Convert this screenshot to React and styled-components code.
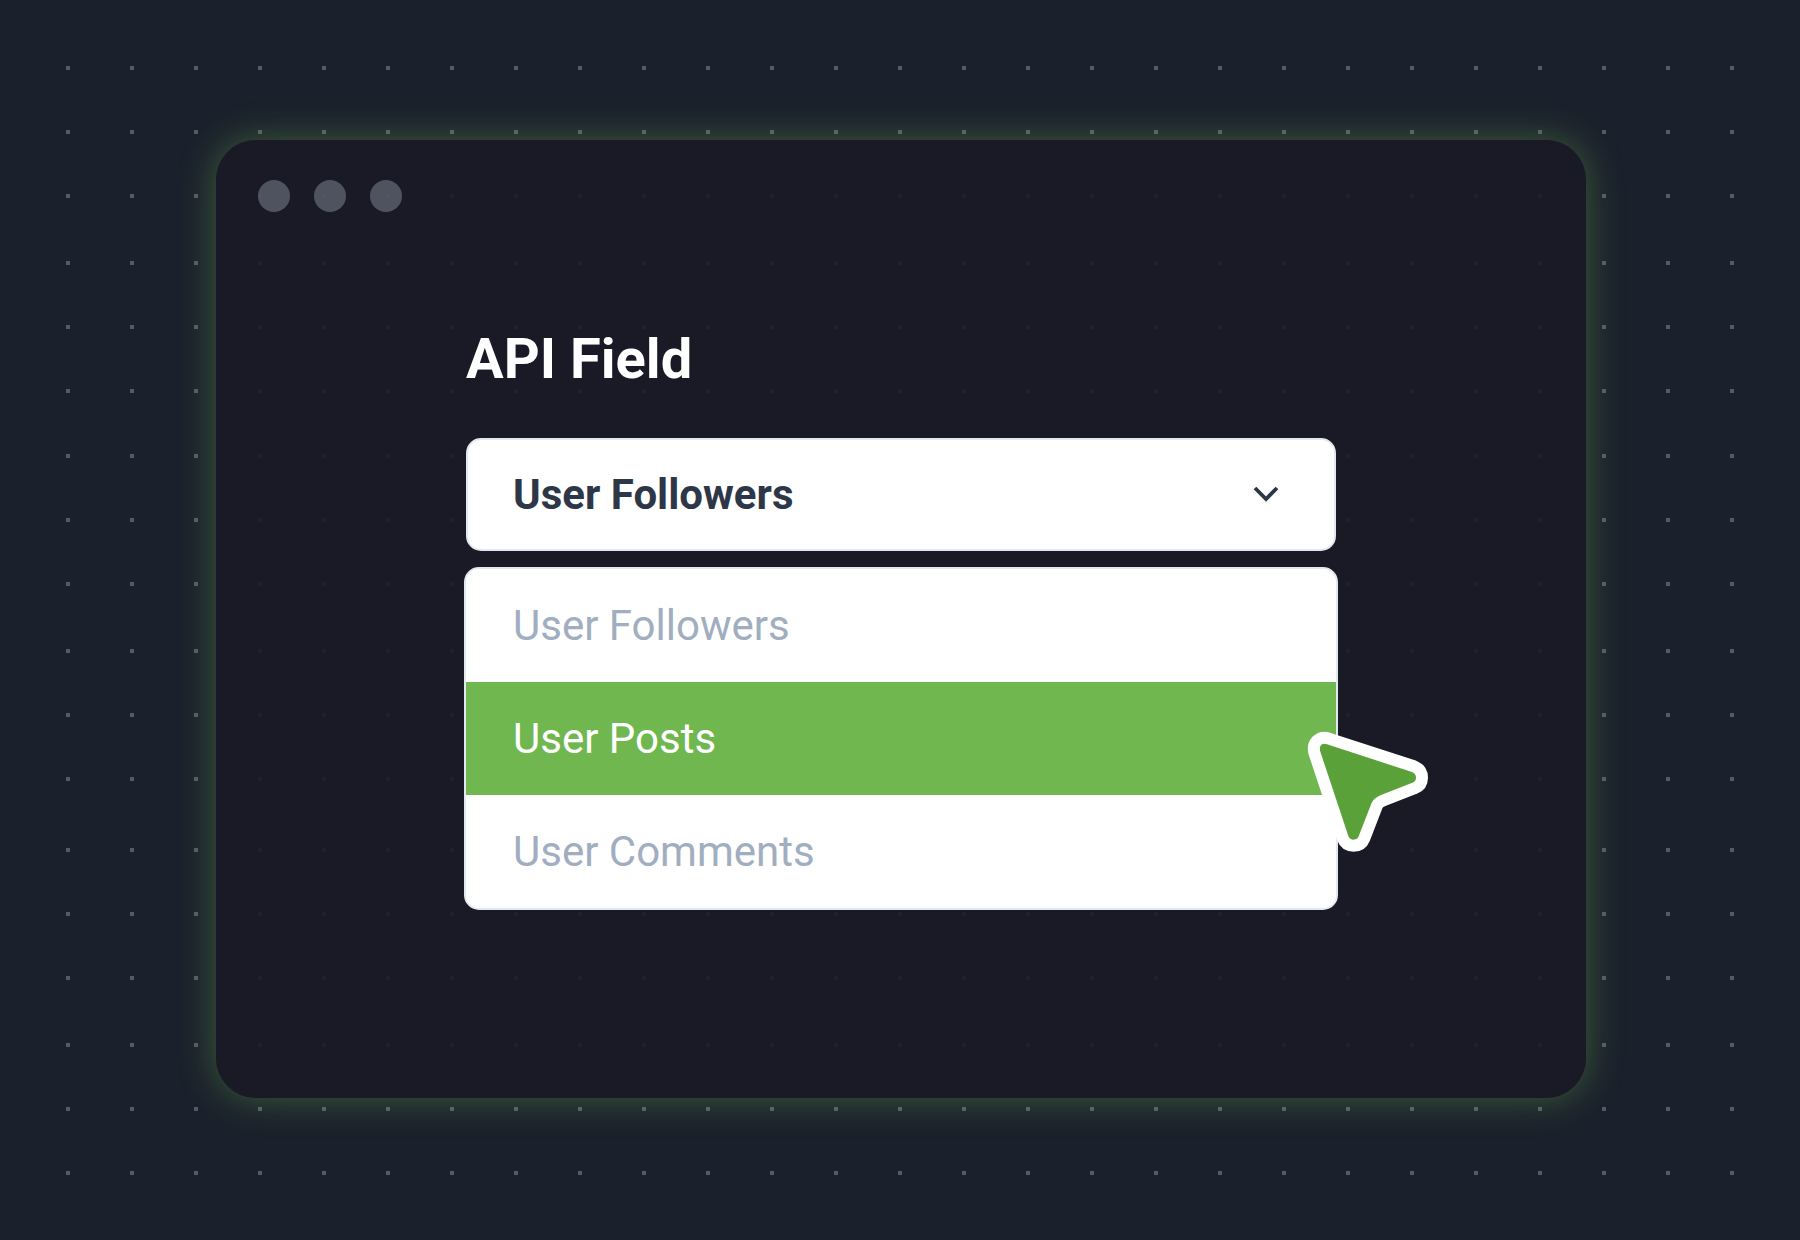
import React, { useState } from "react";
import styled, { createGlobalStyle } from "styled-components";

const GlobalStyle = createGlobalStyle`
  *, *::before, *::after { box-sizing: border-box; }
  body {
    margin: 0;
    background: #1b212c;
    font-family: Roboto, "Liberation Sans", sans-serif;
  }
`;

const Page = styled.main`
  position: relative;
  display: flex;
  justify-content: center;
  min-height: 100vh;
  padding: 140px 214px 142px 216px;
`;

const DotField = styled.svg`
  position: absolute;
  inset: 0;
  width: 100%;
  height: 100%;
`;

const Window = styled.section`
  position: relative;
  flex: 1;
  padding: 40px 42px;
  border-radius: 40px;
  background: rgba(26, 26, 37, 0.9);
  box-shadow: 0 0 36px rgba(112, 183, 80, 0.4);
`;

const TitleBar = styled.div`
  display: flex;
  gap: 24px;
`;

const WindowDot = styled.span`
  width: 32px;
  height: 32px;
  border-radius: 50%;
  background: rgba(113, 120, 132, 0.62);
`;

const Form = styled.form`
  max-width: 870px;
  margin: 0 auto;
  padding-top: 113px;
`;

const Label = styled.label`
  display: block;
  margin-bottom: 45px;
  color: #fff;
  font-size: 56px;
  font-weight: 700;
  line-height: 68px;
`;

const SelectBox = styled.div`
  display: grid;
  align-items: center;
  margin-bottom: 16px;
`;

const Select = styled.select`
  grid-area: 1 / 1;
  appearance: none;
  width: 100%;
  height: 113px;
  padding: 0 45px;
  border: 2px solid #e2e8f0;
  border-radius: 15px;
  outline: none;
  background: #fff;
  color: #2d3748;
  font: 700 42px/56px Roboto, "Liberation Sans", sans-serif;
`;

const Chevron = styled.svg`
  grid-area: 1 / 1;
  justify-self: end;
  width: 30px;
  height: 20px;
  margin-right: 55px;
  pointer-events: none;
`;

const Menu = styled.div`
  position: relative;
  margin: 0 -2px;
`;

const OptionList = styled.div`
  display: flex;
  flex-direction: column;
  overflow: hidden;
  border: 2px solid #e2e8f0;
  border-radius: 15px;
  background: #fff;
`;

const Option = styled.button`
  height: 113px;
  padding: 0 47px;
  border: 0;
  background: ${(p) => (p.$active ? "#70b750" : "#fff")};
  color: ${(p) => (p.$active ? "#fff" : "#a0aec0")};
  font: 400 42px/56px Roboto, "Liberation Sans", sans-serif;
  text-align: left;
`;

const Cursor = styled.svg`
  position: absolute;
  right: -91px;
  top: 164px;
  width: 122px;
  height: 122px;
  pointer-events: none;
`;

const dotRows = [
  66, 130, 194, 261, 325, 389, 454, 518, 582, 649, 713, 777, 848, 912, 976,
  1043, 1107, 1171,
];
const dotColumns = Array.from({ length: 27 }, (_, i) => 66 + i * 64);
const fields = ["User Followers", "User Posts", "User Comments"];
const arrow =
  "M141 133 L396 216 Q408 221 408 233 Q408 244 397 248 L305 284 Q284 291 275 308 L236 409 Q232 419 221 419 Q209 419 205 408 L121 155 Q117 143 123 136 Q130 129 141 133 Z";

export default function App() {
  const [active, setActive] = useState("User Posts");

  return (
    <>
      <GlobalStyle />
      <Page>
        <DotField aria-hidden="true" fill="#545a66" shapeRendering="crispEdges">
          {dotRows.map((y) =>
            dotColumns.map((x) => (
              <rect key={`${x}-${y}`} x={x} y={y} width="4" height="4" />
            ))
          )}
        </DotField>
        <Window>
          <TitleBar>
            <WindowDot />
            <WindowDot />
            <WindowDot />
          </TitleBar>
          <Form>
            <Label htmlFor="api-field">API Field</Label>
            <SelectBox>
              <Select id="api-field" defaultValue="User Followers">
                {fields.map((name) => (
                  <option key={name}>{name}</option>
                ))}
              </Select>
              <Chevron viewBox="0 0 30 20" aria-hidden="true">
                <path
                  d="M4 3 L15 14 L26 3"
                  fill="none"
                  stroke="#2d3748"
                  strokeWidth="3.8"
                />
              </Chevron>
            </SelectBox>
            <Menu>
              <OptionList role="listbox" aria-label="API Field">
                {fields.map((name) => (
                  <Option
                    key={name}
                    type="button"
                    role="option"
                    aria-selected={name === active}
                    $active={name === active}
                    onMouseEnter={() => setActive(name)}
                  >
                    {name}
                  </Option>
                ))}
              </OptionList>
              <Cursor viewBox="81 93 366 366" aria-hidden="true">
                <path
                  d={arrow}
                  fill="#fff"
                  stroke="#fff"
                  strokeWidth="72"
                  strokeLinejoin="round"
                />
                <path d={arrow} fill="#5ba13a" />
              </Cursor>
            </Menu>
          </Form>
        </Window>
      </Page>
    </>
  );
}
